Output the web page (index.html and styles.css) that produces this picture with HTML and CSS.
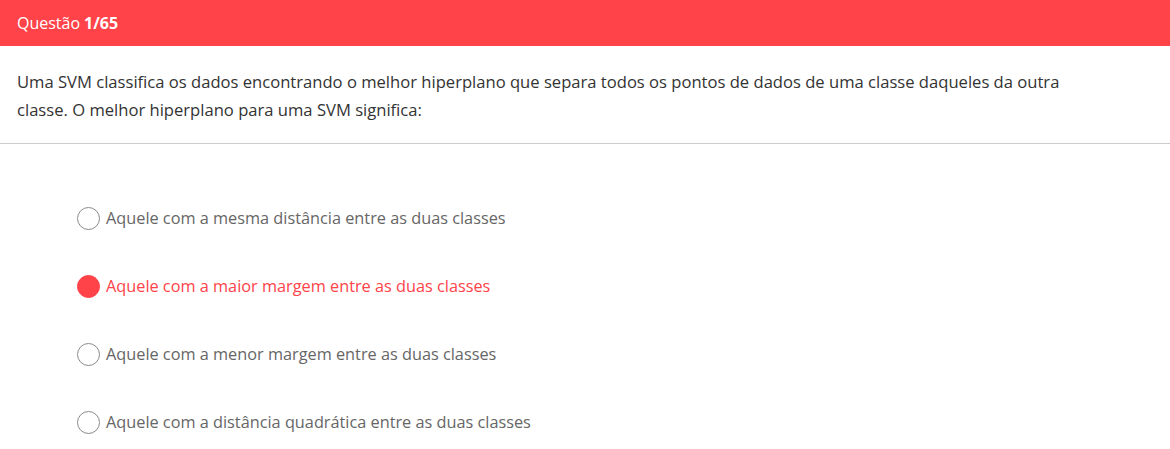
FILE: index.html
```html
<!DOCTYPE html>
<html lang="pt">
<head>
<meta charset="utf-8">
<link rel="stylesheet" href="styles.css">
</head>
<body>
<header class="bar">Questão <strong>1/65</strong></header>
<section class="question">
<p>Uma SVM classifica os dados encontrando o melhor hiperplano que separa todos os pontos de dados de uma classe daqueles da outra classe. O melhor hiperplano para uma SVM significa:</p>
</section>
<ul class="options">
<li class="option"><span class="radio"></span><span>Aquele com a mesma distância entre as duas classes</span></li>
<li class="option selected"><span class="radio"></span><span>Aquele com a maior margem entre as duas classes</span></li>
<li class="option"><span class="radio"></span><span>Aquele com a menor margem entre as duas classes</span></li>
<li class="option"><span class="radio"></span><span>Aquele com a distância quadrática entre as duas classes</span></li>
</ul>
</body>
</html>
```
FILE: styles.css
```css
* { box-sizing: border-box; }
body {
  margin: 0;
  font-family: "Open Sans", "Noto Sans", sans-serif;
  background: #fff;
  color: #333;
}
.bar {
  height: 46px;
  background: #ff4349;
  color: #fff;
  font-size: 16px;
  display: flex;
  align-items: center;
  padding-left: 17px;
  gap: 4px;
}
.bar strong { font-weight: 700; }
.question {
  padding: 22px 17px 19px;
  border-bottom: 1px solid #cccccc;
}
.question p {
  margin: 0;
  font-size: 16.6px;
  line-height: 28px;
  max-width: 1075px;
  color: #333;
}
.options {
  list-style: none;
  margin: 0;
  padding: 40px 0 0 77px;
}
.option {
  height: 68px;
  display: flex;
  align-items: center;
  gap: 6px;
  font-size: 16.3px;
  color: #666;
}
.radio {
  width: 23px;
  height: 23px;
  border-radius: 50%;
  border: 1px solid #8a8a8a;
  flex: none;
}
.option.selected { color: #ff4349; }
.option.selected .radio {
  background: #ff4349;
  border-color: #ff4349;
}
```
